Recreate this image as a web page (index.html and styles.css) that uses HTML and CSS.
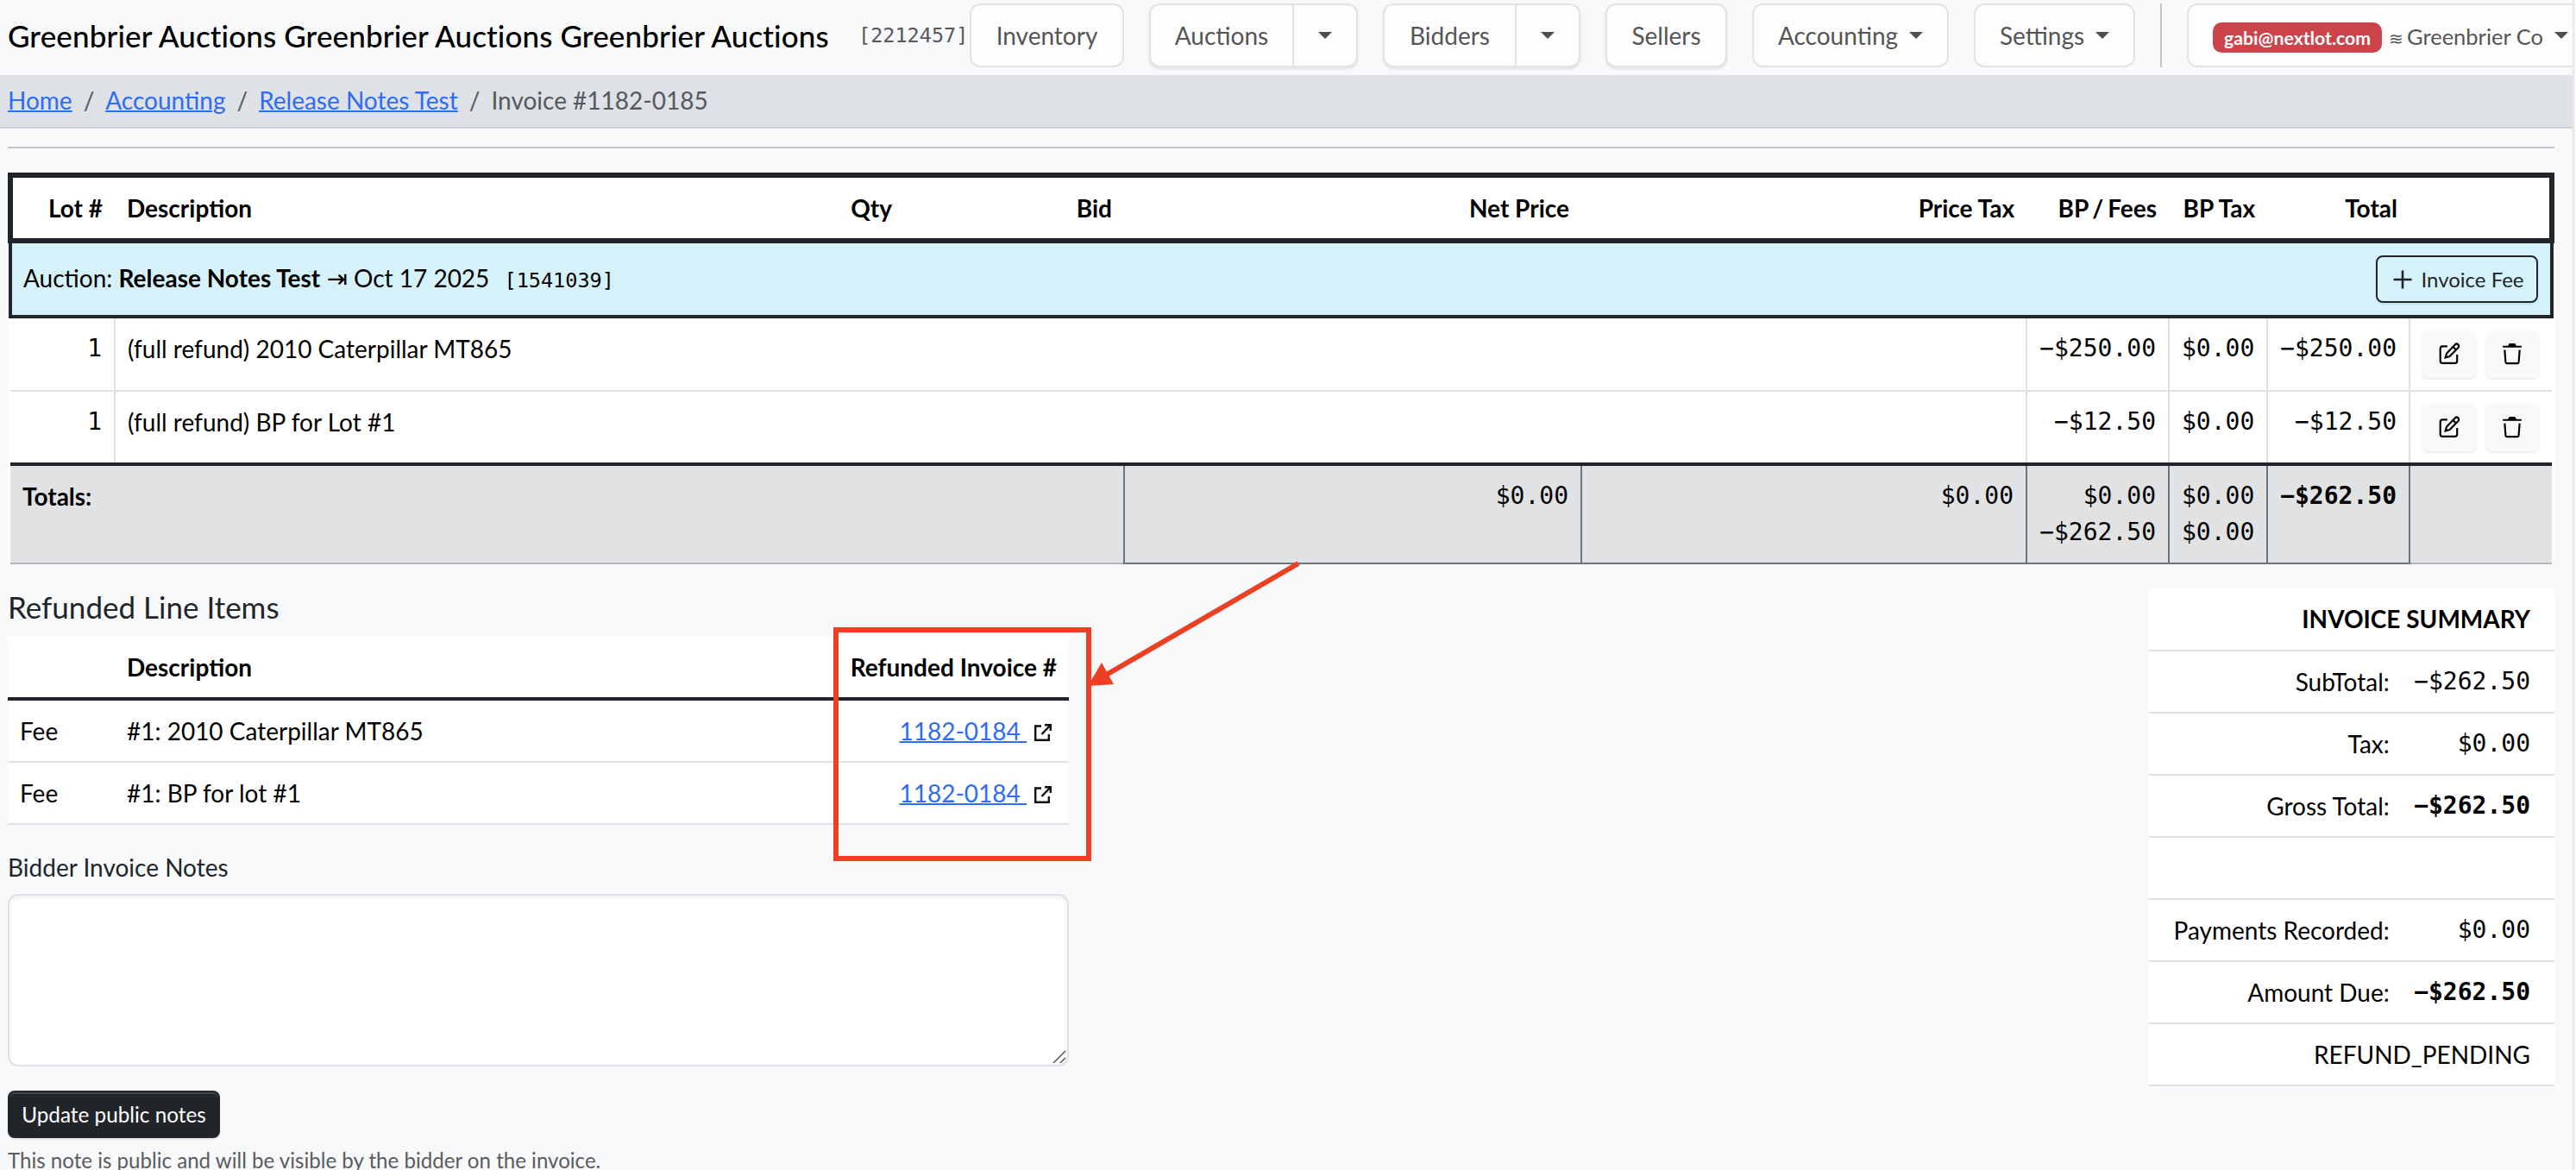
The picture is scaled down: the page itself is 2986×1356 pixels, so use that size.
FILE: index.html
```html
<!DOCTYPE html>
<html lang="en">
<head>
    <meta charset="UTF-8">
    <meta name="viewport" content="width=device-width, initial-scale=1.0">
    <title>Invoice #1182-0185</title>
    <link rel="stylesheet" href="styles.css">
</head>
<body>

<svg class="sprite" width="0" height="0">
    <symbol id="icon-edit" viewBox="0 0 24 24">
        <path d="M10 4H5A2.500 2.500 0 0 0 2.500 6.500v13A2.500 2.500 0 0 0 5 22h13a2.500 2.500 0 0 0 2.500-2.500V13"/>
        <path d="M18.300 2.200a2.300 2.300 0 0 1 3.300 3.300L12.500 14.700l-4.500 1.300 1.300-4.500zM16 4.500l3.300 3.300"/>
    </symbol>
    <symbol id="icon-trash" viewBox="0 0 24 24">
        <path class="lid" d="M2 3.500h5.500l1.500-2.500h6l1.500 2.500H22v1.800H2z"/>
        <path d="M4 8l1 13a1.200 1.200 0 0 0 1.200 1.200h11.600a1.200 1.200 0 0 0 1.200-1.200l1-13"/>
    </symbol>
    <symbol id="icon-link" viewBox="0 0 20 20">
        <path d="M8 2.500H1.200v16.300h15.600V12M12 1.200h6.800V8M18.500 1.500L8.500 12"/>
    </symbol>
</svg>

<div class="page">
    <header class="topbar">
        <div class="brand">Greenbrier Auctions Greenbrier Auctions Greenbrier Auctions</div>
        <span class="brand-id">[2212457]</span>
        <nav class="menu">
            <a class="menu-btn inventory">Inventory</a>
            <div class="menu-group auctions">
                <a class="group-label">Auctions</a><a class="group-toggle"><i class="caret"></i></a>
            </div>
            <div class="menu-group bidders">
                <a class="group-label">Bidders</a><a class="group-toggle"><i class="caret"></i></a>
            </div>
            <a class="menu-btn raised sellers">Sellers</a>
            <a class="menu-btn accounting">Accounting <i class="caret"></i></a>
            <a class="menu-btn settings">Settings <i class="caret"></i></a>
            <div class="vr"></div>
            <a class="menu-btn user"><span class="badge">gabi@nextlot.com</span><span class="wave">≋</span><span class="company">Greenbrier Co</span><i class="caret"></i></a>
        </nav>
    </header>

    <div class="breadcrumb">
        <a href="#">Home</a><span class="sep">/</span><a href="#">Accounting</a><span class="sep">/</span><a href="#">Release Notes Test</a><span class="sep">/</span><span>Invoice #1182-0185</span>
    </div>

    <main class="content">
        <hr>
        <table class="lines">
            <colgroup>
                <col class="c-lot"><col class="c-desc"><col class="c-qty"><col class="c-bid"><col class="c-net"><col class="c-ptax"><col class="c-fees"><col class="c-bptax"><col class="c-total"><col class="c-act">
            </colgroup>
            <thead>
                <tr>
                    <th class="num">Lot #</th>
                    <th>Description</th>
                    <th class="num">Qty</th>
                    <th class="num">Bid</th>
                    <th class="num">Net Price</th>
                    <th class="num">Price Tax</th>
                    <th class="num tight">BP / Fees</th>
                    <th class="num">BP Tax</th>
                    <th class="num">Total</th>
                    <th></th>
                </tr>
            </thead>
            <tbody>
                <tr class="auction">
                    <td colspan="10">
                        <div class="auction-row">
                            <div>Auction: <b>Release Notes Test</b> <span class="tab-arrow">⇥</span> Oct 17 2025 <span class="auction-id">[1541039]</span></div>
                            <button class="btn-outline"><svg class="plus" viewBox="0 0 22 22"><path d="M11 0.500v21M0.500 11h21"/></svg>Invoice Fee</button>
                        </div>
                    </td>
                </tr>
                <tr class="item first">
                    <td class="num mono">1</td>
                    <td colspan="5">(full refund) 2010 Caterpillar MT865</td>
                    <td class="num mono">−$250.00</td>
                    <td class="num mono">$0.00</td>
                    <td class="num mono">−$250.00</td>
                    <td><div class="actions">
                        <button class="btn-icon"><svg><use href="#icon-edit"/></svg></button>
                        <button class="btn-icon"><svg><use href="#icon-trash"/></svg></button>
                    </div></td>
                </tr>
                <tr class="item">
                    <td class="num mono">1</td>
                    <td colspan="5">(full refund) BP for Lot #1</td>
                    <td class="num mono">−$12.50</td>
                    <td class="num mono">$0.00</td>
                    <td class="num mono">−$12.50</td>
                    <td><div class="actions">
                        <button class="btn-icon"><svg><use href="#icon-edit"/></svg></button>
                        <button class="btn-icon"><svg><use href="#icon-trash"/></svg></button>
                    </div></td>
                </tr>
            </tbody>
            <tfoot>
                <tr>
                    <td colspan="4"><b>Totals:</b></td>
                    <td class="num mono boxed">$0.00</td>
                    <td class="num mono boxed">$0.00</td>
                    <td class="num mono boxed">$0.00<br>−$262.50</td>
                    <td class="num mono boxed">$0.00<br>$0.00</td>
                    <td class="num mono boxed"><b>−$262.50</b></td>
                    <td></td>
                </tr>
            </tfoot>
        </table>

        <div class="columns">
            <section class="left">
                <h5>Refunded Line Items</h5>
                <table class="refunds">
                    <thead>
                        <tr><th class="r-type"></th><th>Description</th><th class="r-inv num">Refunded Invoice #</th></tr>
                    </thead>
                    <tbody>
                        <tr>
                            <td>Fee</td>
                            <td>#1: 2010 Caterpillar MT865</td>
                            <td class="num"><a href="#">1182-0184&nbsp;</a><svg class="ext"><use href="#icon-link"/></svg></td>
                        </tr>
                        <tr>
                            <td>Fee</td>
                            <td>#1: BP for lot #1</td>
                            <td class="num"><a href="#">1182-0184&nbsp;</a><svg class="ext"><use href="#icon-link"/></svg></td>
                        </tr>
                    </tbody>
                </table>

                <label for="notes">Bidder Invoice Notes</label>
                <div class="notes">
                    <textarea id="notes"></textarea>
                    <svg class="grip" viewBox="0 0 16 16"><path d="M1 15L15 1M9 15l6-6"/></svg>
                </div>
                <button class="btn-dark">Update public notes</button>
                <p class="hint">This note is public and will be visible by the bidder on the invoice.</p>

                <!-- callout on the refunded invoice column -->
                <svg class="callout" viewBox="0 0 550 360">
                    <rect x="8" y="80" width="293" height="265"/>
                    <path d="M544 3L318 134"/>
                    <polygon points="300,145 316,118 330,143"/>
                </svg>
            </section>

            <table class="summary">
                <tr><th colspan="2">INVOICE SUMMARY</th></tr>
                <tr><td>SubTotal:</td><td class="mono">−$262.50</td></tr>
                <tr><td>Tax:</td><td class="mono">$0.00</td></tr>
                <tr><td>Gross Total:</td><td class="mono"><b>−$262.50</b></td></tr>
                <tr><td colspan="2">&nbsp;</td></tr>
                <tr><td>Payments Recorded:</td><td class="mono">$0.00</td></tr>
                <tr><td>Amount Due:</td><td class="mono"><b>−$262.50</b></td></tr>
                <tr><td colspan="2">REFUND_PENDING</td></tr>
            </table>
        </div>
    </main>
</div>

</body>
</html>
```
FILE: styles.css
```css
* {
    box-sizing: border-box;
}
body {
    margin: 0;
    height: 1356px;
    overflow: hidden;
    background-color: #fafafa;
    color: #212529;
    font-family: Lato, "Liberation Sans", sans-serif;
    font-size: 28px;
    line-height: 42px;
}
.sprite {
    position: absolute;
}
.page {
    width: 2984px;
    height: 1356px;
    overflow: hidden;
    background-color: #f8f9fb;
    border-right: 2px solid #e6e7e9;
}
button {
    font-family: inherit;
    margin: 0;
}
.mono {
    font-family: "DejaVu Sans Mono", "Liberation Mono", monospace;
    font-size: 28px;
}

/* Top bar */
.topbar {
    display: flex;
    align-items: center;
    height: 87px;
    padding: 0 0 6px 9px;
    overflow: hidden;
    white-space: nowrap;
}
.brand {
    flex-shrink: 0;
    width: 986px;
    font-size: 35px;
    font-weight: 500;
    letter-spacing: 0.12px;
    color: #000;
}
.brand-id {
    flex-shrink: 0;
    width: 129px;
    font-family: "DejaVu Sans Mono", monospace;
    font-size: 23.5px;
    color: #55585c;
}
.menu {
    display: flex;
    flex-shrink: 0;
    gap: 29px;
    height: 74px;
}
.menu-btn, .menu-group {
    display: flex;
    flex-shrink: 0;
    align-items: center;
    justify-content: center;
    height: 74px;
    border: 2px solid #e2e3e4;
    border-radius: 12px;
    background-color: #fdfdfd;
    color: #555;
}
.menu-group, .raised {
    box-shadow: 0 2px 3px rgba(0, 0, 0, 0.1);
}
.inventory { width: 179px; }
.auctions { width: 242px; }
.bidders { width: 229px; }
.sellers { width: 141px; }
.accounting { width: 228px; }
.settings { width: 187px; }
.user {
    width: 480px;
    justify-content: flex-start;
    padding-left: 28px;
    font-size: 25.5px;
}
.group-label {
    flex: 1;
    text-align: center;
}
.group-toggle {
    display: flex;
    align-items: center;
    justify-content: center;
    width: 74px;
    height: 70px;
    border-left: 2px solid #e2e3e4;
}
.caret {
    border: 8px solid transparent;
    border-top-color: #4d4f51;
    border-bottom: 0;
}
.menu-btn .caret {
    margin-left: 13px;
}
.vr {
    width: 2px;
    background-color: #c2c4c6;
}
.badge {
    width: 196px;
    height: 35px;
    margin-top: 5px;
    border-radius: 10px;
    background-color: #cb444a;
    color: #fff;
    font-size: 21.3px;
    font-weight: 700;
    line-height: 37px;
    text-align: center;
}
.wave {
    width: 29px;
    padding-left: 8px;
    font-size: 20px;
    margin-top: 6px;
}
.company {
    margin-top: 3px;
}

/* Breadcrumb */
.breadcrumb {
    height: 62px;
    padding: 8px 9px;
    background-color: #dee1e6;
    border-bottom: 2px solid #ced2d8;
    color: #55585c;
}
.sep {
    padding: 0 13px;
}
a[href] {
    color: #2f6bf6;
    text-decoration: underline;
    text-decoration-thickness: 2px;
}

.content {
    padding: 0 21px 0 9px;
}
hr {
    height: 2px;
    margin: 21px 0 28px;
    border: 0;
    background-color: #c4c6c9;
}

/* Invoice lines */
table {
    border-collapse: collapse;
    background-color: #fff;
    color: #000;
}
th, td {
    padding: 14px;
    text-align: left;
    vertical-align: top;
    font-weight: 400;
}
th {
    font-weight: 700;
}
.num {
    text-align: right;
}
.tight {
    word-spacing: -2px;
}
.lines {
    width: 2952px;
    table-layout: fixed;
}
.c-lot { width: 121px; }
.c-desc { width: 723px; }
.c-qty { width: 192px; }
.c-bid { width: 255px; }
.c-net { width: 530px; }
.c-ptax { width: 516px; }
.c-fees { width: 165px; }
.c-bptax { width: 114px; }
.c-total { width: 165px; }
.c-act { width: 165px; }
.lines thead tr {
    border: 6px solid #212529;
}
.lines th {
    height: 76px;
    padding: 14px;
    vertical-align: middle;
}
.auction {
    border: 4px solid #212529;
}
.auction td {
    padding: 14px 14px 14px 13px;
    background-color: #d5f2fa;
    vertical-align: middle;
}
.auction-row {
    display: flex;
    align-items: center;
    justify-content: space-between;
    height: 55px;
}
.tab-arrow {
    font-family: "DejaVu Sans", sans-serif;
    font-size: 29px;
    line-height: 1;
}
.auction-id {
    margin-left: 10px;
    font-family: "DejaVu Sans Mono", monospace;
    font-size: 23.5px;
}
.btn-outline {
    display: flex;
    align-items: center;
    justify-content: center;
    gap: 10px;
    width: 188px;
    height: 55px;
    padding: 0 0 0 4px;
    border: 2px solid #212529;
    border-radius: 8px;
    background: transparent;
    color: #212529;
    font-size: 24px;
    box-shadow: 0 2px 2px rgba(0, 0, 0, 0.08);
}
.plus {
    width: 22px;
    height: 22px;
    stroke: #212529;
    stroke-width: 2.6;
}
.item {
    height: 85px;
    border-bottom: 2px solid #dee2e6;
}
.first {
    height: 86px;
}
.item td + td {
    border-left: 2px solid #dee2e6;
}
.item td {
    padding-bottom: 0;
}
.actions {
    display: flex;
    gap: 10px;
    height: 55px;
    margin-left: -1px;
}
.btn-icon {
    width: 64px;
    height: 55px;
    padding: 0;
    border: 0;
    border-radius: 8px;
    background-color: #f8f9fa;
    box-shadow: 0 2px 2px rgba(0, 0, 0, 0.07);
}
.btn-icon svg {
    display: block;
    width: 26px;
    height: 26px;
    margin: -2px auto 0;
    fill: none;
    stroke: #000;
    stroke-width: 2;
}
.lid {
    fill: #000;
    stroke: none;
}
tfoot tr {
    height: 115px;
    border-top: 4px solid #212529;
    border-bottom: 2px solid #b3b5b8;
    background-color: #e1e2e4;
}
.boxed {
    border: 2px solid #6c757d;
    border-top: 4px solid #212529;
}

/* Lower part */
.columns {
    display: flex;
    justify-content: space-between;
    align-items: flex-start;
    padding-top: 28px;
}
.left {
    position: relative;
    width: 1230px;
}
h5 {
    margin: 0 0 14px;
    font-size: 35px;
    font-weight: 400;
    line-height: 42px;
}
.refunds {
    width: 1230px;
    table-layout: fixed;
}
.refunds thead tr {
    border-bottom: 4px solid #212529;
}
.refunds tbody tr {
    border-bottom: 2px solid #dee2e6;
}
.r-type { width: 124px; }
.r-inv { width: 270px; }
.ext {
    width: 20px;
    height: 20px;
    margin: 0 6px 0 9px;
    vertical-align: -1px;
    fill: none;
    stroke: #111;
    stroke-width: 2.4;
}
label {
    display: block;
    margin-top: 28px;
    margin-bottom: 10px;
}
.notes {
    position: relative;
}
textarea {
    display: block;
    width: 1230px;
    height: 200px;
    border: 2px solid #dee2e6;
    border-radius: 12px;
    background-color: #fff;
    box-shadow: inset 0 2px 4px rgba(0, 0, 0, 0.075);
    resize: none;
}
.grip {
    position: absolute;
    right: 3px;
    bottom: 3px;
    width: 16px;
    height: 16px;
    stroke: #555;
    stroke-width: 1.5;
}
.btn-dark {
    display: block;
    width: 246px;
    height: 55px;
    margin-top: 28px;
    padding: 0;
    border: 2px solid #212529;
    border-radius: 8px;
    background-color: #212529;
    color: #fff;
    font-size: 24.3px;
    box-shadow: inset 0 2px 0 rgba(255, 255, 255, 0.15), 0 2px 2px rgba(0, 0, 0, 0.075);
}
.hint {
    margin: 7px 0 0;
    font-size: 24.1px;
    line-height: 37px;
    color: #595c5f;
}
.callout {
    position: absolute;
    left: 952px;
    top: -32px;
    width: 550px;
    height: 360px;
    fill: none;
    stroke: #ec4025;
    stroke-width: 6;
}
.callout polygon {
    fill: #ec4025;
    stroke: none;
}

/* Summary */
.summary {
    width: 470px;
}
.summary tr {
    height: 72px;
    border-bottom: 2px solid #dee2e6;
}
.summary th, .summary td {
    text-align: right;
}
.summary td:first-child {
    padding-left: 28px;
}
.summary tr > :last-child {
    padding-right: 28px;
}
```
